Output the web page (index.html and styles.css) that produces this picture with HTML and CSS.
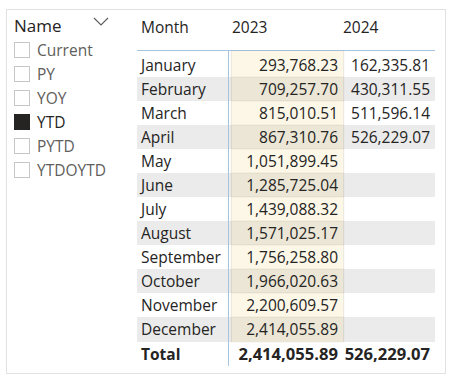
FILE: index.html
```html
<!DOCTYPE html>
<html>
<head>
<meta charset="utf-8">
<link rel="stylesheet" href="styles.css">
</head>
<body>
<div class="frame">
  <div class="slicer">
    <div class="slicer-head">
      <span class="slicer-title">Name</span>
      <svg class="chev" width="16" height="9" viewBox="0 0 16 9"><polyline points="1,1 8,8 15,1" fill="none" stroke="#605e5c" stroke-width="1.2"/></svg>
    </div>
    <div class="item"><span class="box"></span><span>Current</span></div>
    <div class="item"><span class="box"></span><span>PY</span></div>
    <div class="item"><span class="box"></span><span>YOY</span></div>
    <div class="item sel"><span class="box"></span><span>YTD</span></div>
    <div class="item"><span class="box"></span><span>PYTD</span></div>
    <div class="item"><span class="box"></span><span>YTDOYTD</span></div>
  </div>
  <div class="tablevis">
    <div class="thead">
      <div class="c1">Month</div><div class="c2">2023</div><div class="c3">2024</div>
    </div>
    <div class="tbody">
      <div class="row first"><div class="c1">January</div><div class="c2"><div class="hl">293,768.23</div></div><div class="c3">162,335.81</div></div>
      <div class="row alt"><div class="c1">February</div><div class="c2"><div class="hl">709,257.70</div></div><div class="c3">430,311.55</div></div>
      <div class="row"><div class="c1">March</div><div class="c2"><div class="hl">815,010.51</div></div><div class="c3">511,596.14</div></div>
      <div class="row alt"><div class="c1">April</div><div class="c2"><div class="hl">867,310.76</div></div><div class="c3">526,229.07</div></div>
      <div class="row"><div class="c1">May</div><div class="c2"><div class="hl">1,051,899.45</div></div><div class="c3"></div></div>
      <div class="row alt"><div class="c1">June</div><div class="c2"><div class="hl">1,285,725.04</div></div><div class="c3"></div></div>
      <div class="row"><div class="c1">July</div><div class="c2"><div class="hl">1,439,088.32</div></div><div class="c3"></div></div>
      <div class="row alt"><div class="c1">August</div><div class="c2"><div class="hl">1,571,025.17</div></div><div class="c3"></div></div>
      <div class="row"><div class="c1">September</div><div class="c2"><div class="hl">1,756,258.80</div></div><div class="c3"></div></div>
      <div class="row alt"><div class="c1">October</div><div class="c2"><div class="hl">1,966,020.63</div></div><div class="c3"></div></div>
      <div class="row"><div class="c1">November</div><div class="c2"><div class="hl">2,200,609.57</div></div><div class="c3"></div></div>
      <div class="row alt last"><div class="c1">December</div><div class="c2"><div class="hl">2,414,055.89</div></div><div class="c3"></div></div>
      <div class="row total"><div class="c1">Total</div><div class="c2"><div class="tv">2,414,055.89</div></div><div class="c3">526,229.07</div></div>
    </div>
  </div>
</div>
</body>
</html>
```
FILE: styles.css
```css
html, body {
  margin: 0;
  padding: 0;
  background: #ffffff;
}
body {
  font-family: "Open Sans", "Noto Sans", sans-serif;
  color: #252423;
}
.frame {
  margin: 9px 0 0 6px;
  width: 440px;
  height: 365px;
  box-sizing: border-box;
  border: 1px solid #e3e1df;
  display: flex;
}
.slicer {
  width: 126px;
  padding-left: 7px;
  box-sizing: border-box;
}
.slicer-head {
  display: flex;
  align-items: center;
  height: 28px;
  padding-top: 3px;
  box-sizing: border-box;
}
.slicer-title {
  font-size: 17px;
  line-height: 24px;
  color: #252423;
}
.chev {
  margin-left: 31px;
  margin-top: -8px;
}
.item {
  display: flex;
  align-items: center;
  height: 24px;
  font-size: 15.5px;
  color: #605e5c;
}
.box {
  width: 16px;
  height: 16px;
  box-sizing: border-box;
  border: 1px solid #c8c6c4;
  margin-right: 7px;
  flex: none;
}
.item.sel {
  color: #252423;
}
.item.sel .box {
  background: #252423;
  border-color: #252423;
}
.tablevis {
  flex: 1;
  padding-left: 4px;
  font-size: 15.5px;
}
.thead, .row {
  display: grid;
  grid-template-columns: 91px 115px 92px;
  width: 298px;
}
.thead {
  height: 41px;
  box-sizing: border-box;
  padding-top: 5px;
  border-bottom: 1px solid #a6c4de;
  line-height: 24px;
}
.thead .c1 { padding-left: 4px; }
.thead .c2 { padding-left: 4px; }
.thead .c3 { padding-left: 0; }
.row {
  height: 24px;
  line-height: 24px;
}
.row.first {
  height: 26px;
}
.row.first .c1, .row.first .c3 {
  padding-top: 2px;
}
.row.first .hl {
  padding-top: 2px;
}
.row.last {
  height: 25px;
}
.row.alt {
  background: #ebebeb;
}
.row .c1 {
  padding-left: 4px;
  white-space: nowrap;
}
.row .c2 {
  border-left: 1px solid #a6c4de;
}
.hl {
  margin-left: 3px;
  height: 100%;
  box-sizing: border-box;
  padding-right: 5px;
  text-align: right;
  background: rgba(240, 215, 130, 0.19);
  box-shadow: 1px 0 1px rgba(120, 100, 40, 0.14), -1px 0 1px rgba(120, 100, 40, 0.14);
}
.tv {
  text-align: right;
  padding-right: 5px;
}
.row .c3 {
  text-align: right;
  padding-right: 5px;
}
.row.total {
  font-weight: 700;
}
.row.total .tv, .row.total .c3 {
  font-size: 16.6px;
}
```
